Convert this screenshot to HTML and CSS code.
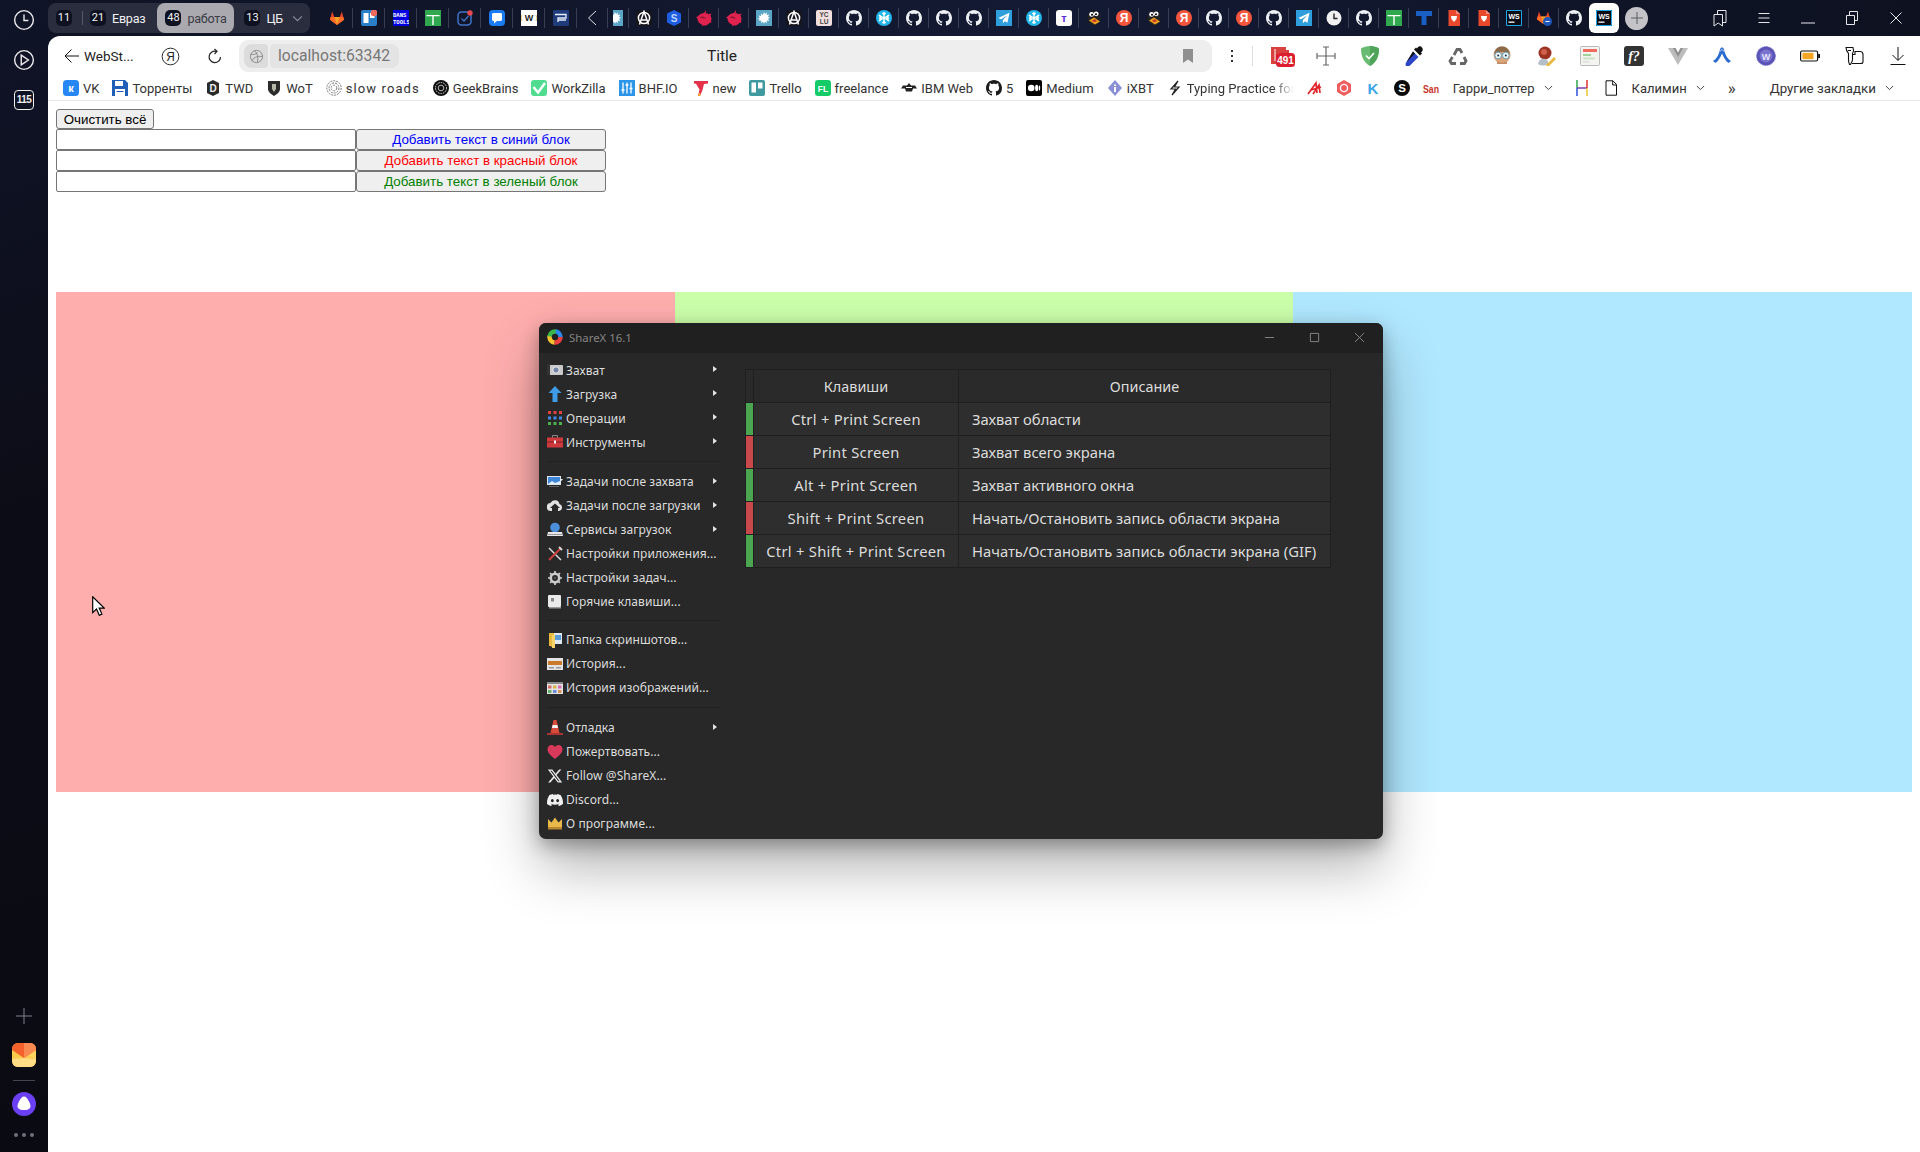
FILE: index.html
```html
<!DOCTYPE html>
<html lang="ru">
<head>
<meta charset="utf-8">
<title>Title</title>
<link rel="stylesheet" href="styles.css">
</head>
<body>
<svg class="defs" aria-hidden="true">
  <symbol id="gh" viewBox="0 0 16 16"><path fill="currentColor" d="M8 0C3.58 0 0 3.58 0 8c0 3.54 2.29 6.53 5.47 7.59.4.07.55-.17.55-.38 0-.19-.01-.82-.01-1.49-2.01.37-2.53-.49-2.69-.94-.09-.23-.48-.94-.82-1.13-.28-.15-.68-.52-.01-.53.63-.01 1.08.58 1.23.82.72 1.21 1.87.87 2.33.66.07-.52.28-.87.51-1.07-1.78-.2-3.64-.89-3.64-3.95 0-.87.31-1.59.82-2.15-.08-.2-.36-1.02.08-2.12 0 0 .67-.21 2.2.82.64-.18 1.32-.27 2-.27s1.36.09 2 .27c1.53-1.04 2.2-.82 2.2-.82.44 1.1.16 1.92.08 2.12.51.56.82 1.27.82 2.15 0 3.07-1.87 3.75-3.65 3.95.29.25.54.73.54 1.48 0 1.07-.01 1.93-.01 2.2 0 .21.15.46.55.38A8.013 8.013 0 0016 8c0-4.42-3.58-8-8-8z"/></symbol>
  <symbol id="gitlab" viewBox="0 0 24 24"><path fill="#e24329" d="M12 22.5 1.4 14.6 4.7 2.4 8 10.4h8l3.3-8 3.3 12.2z"/><path fill="#fc6d26" d="M12 22.5 8 10.4H2.6L1.4 14.6zM12 22.5l4-12.1h5.4l1.2 4.2z"/><path fill="#fca326" d="M12 22.5 8 10.4h8z"/></symbol>
  <symbol id="tg" viewBox="0 0 16 16"><rect width="16" height="16" fill="#2e9fdc"/><path fill="#fff" d="M13.5 2.8 2.3 8l3 1.2 6-4-4.4 4.9v3.2l2-2 2.5 1.4z"/></symbol>
  <symbol id="snow" viewBox="0 0 16 16"><circle cx="8" cy="8" r="8" fill="#23b5e8"/><g stroke="#fff" stroke-width="1.3" fill="none"><path d="M8 2v12M2.8 5l10.4 6M13.2 5 2.8 11"/><path d="M6.4 3 8 4.6 9.600 3M6.400 13 8 11.400 9.600 13M3 7 5 7.700 4.200 5.700M13 9l-2-.7.800 2M13 7l-2 .7.800-2M3 9l2-.7-.8 2"/></g></symbol>
  <symbol id="duck" viewBox="0 0 16 16"><ellipse cx="8" cy="8" rx="6.500" ry="7.500" fill="#222"/><circle cx="5.600" cy="4.400" r="2.400" fill="#fff"/><circle cx="10.200" cy="3.800" r="2.400" fill="#fff"/><circle cx="6" cy="4.800" r="1" fill="#000"/><circle cx="10" cy="4.200" r="1" fill="#000"/><path fill="#f0a020" d="M3 10.500 8 7.500l6 4-5 3z"/><path fill="#c0392b" d="M6 10.500 9 9l2 2.200-3 1z"/></symbol>
  <symbol id="nest" viewBox="0 0 16 16"><path fill="#e0234e" d="M9.500 0c1 1.300.6 2.500-.2 3.300 1.300-.2 2.600.2 3.500 1l2.700-.8-1 2.200c1 1.500 1.300 3.500.5 5.300l.5 1.500-1.800.2C12 14.800 9.700 16 7.500 15.500l-1.500.5.200-1.200C3.500 13.800 1.500 11.500 1.500 8.500L0 7l1.900-.6C3 4.500 5 3.300 7 3.200 8.500 3 9.500 1.500 9.500 0z"/><path fill="#8f1632" d="M3.500 7C5.500 6 8 6.300 10 8.200 8 8.700 5.500 8.500 3.500 7z"/></symbol>
  <symbol id="anarchy" viewBox="0 0 16 16"><rect width="16" height="16" rx="3" fill="#15151c"/><circle cx="8" cy="8" r="5.600" fill="none" stroke="#fff" stroke-width="1.500"/><path d="M3.500 14.500 8 1.500l4.500 13M4.500 10h7" fill="none" stroke="#fff" stroke-width="1.500"/></symbol>
  <symbol id="splash" viewBox="0 0 16 16"><rect width="16" height="16" fill="#5ba6c4"/><path fill="#fff" d="M8 2l1 2 2-1.500-.3 2.500 2.500-.5-1.200 2.300 2 1-2 1 1.200 2.300-2.500-.5.300 2.400-2-1.300-1 2-1-2-2 1.300.3-2.400-2.500.5L3.800 9.800l-2-1 2-1-1.200-2.300 2.500.5-.3-2.500 2 1.500z"/></symbol>
  <symbol id="brave" viewBox="0 0 16 16"><path fill="#e8492d" d="M2.500 0h7.500l4 4v12h-11.500z"/><path fill="#f58f7d" d="M10 0l4 4h-4z"/><path fill="#fff" d="M5 6h6l-.5 3L8 12 5.500 9z"/></symbol>
  <symbol id="green" viewBox="0 0 16 16"><rect width="16" height="16" fill="#2fa84f"/><path fill="#fff" d="M1.500 5h13v1.300h-13zM7.300 5h1.400v10H7.300z"/></symbol>
</svg>

<aside class="side">
  <div class="side-top">
    <svg class="side-ic" viewBox="0 0 20 20"><circle cx="10" cy="10" r="8.500"/><path d="M10 5v5.500h4"/></svg>
    <svg class="side-ic" viewBox="0 0 20 20"><circle cx="10" cy="10" r="8.500"/><path d="M7.500 5.500 14 10l-6.500 4.500z"/></svg>
    <div class="side-badge">115</div>
  </div>
  <div class="side-bottom">
    <svg class="side-plus" viewBox="0 0 16 16"><path d="M8 0v16M0 8h16"/></svg>
    <svg class="side-app" viewBox="0 0 24 24"><rect width="24" height="24" rx="6" fill="#ffc94a"/><path d="M0 6a6 6 0 016-6h12a6 6 0 016 6v1L12 15 0 7z" fill="#f4612c"/><path d="M12 15 24 7v9l-6-3z" fill="#ffd768" opacity=".7"/><path d="M12 0h6a6 6 0 016 6v1l-12 8z" fill="#f98a52"/><path d="M0 16l12-1 12 1v2a6 6 0 01-6 6H6a6 6 0 01-6-6z" fill="#ffdc85"/></svg>
    <div class="side-rule"></div>
    <svg class="side-app" viewBox="0 0 24 24"><circle cx="12" cy="12" r="12" fill="#6b3ff2"/><path fill="#fff" d="M12 4.500c2 0 3.500 2 5 5 1.500 3 2 5 1 6.500-1.500 1.800-3.500 2-6 2s-4.500-.2-6-2c-1-1.500-.5-3.500 1-6.500s3-5 5-5z"/></svg>
    <div class="side-dots"><i></i><i></i><i></i></div>
  </div>
</aside>

<div class="main">
  <header class="strip">
    <div class="groups">
      <span class="num">11</span><span class="gsep"></span>
      <span class="num n2">21</span><span class="glabel">Евраз</span>
      <span class="gactive"><span class="num">48</span><span class="glabel">работа</span></span>
      <span class="num n3">13</span><span class="glabel">ЦБ</span>
      <svg class="gchev" viewBox="0 0 12 8"><path d="M1 1.500 6 6.500l5-5"/></svg>
    </div>
    <div class="tabs t32">
      <span class="slot"><svg class="i"><use href="#gitlab"/></svg></span>
      <span class="slot"><svg class="i" viewBox="0 0 16 16"><rect width="16" height="16" rx="2" fill="#2a7fc9"/><rect x="2.500" y="3" width="5" height="10" fill="#fff"/><rect x="9" y="3" width="4.500" height="5" fill="#fff"/><circle cx="13" cy="3" r="3.300" fill="#ee6a5f"/></svg></span>
      <span class="slot"><svg class="i" viewBox="0 0 16 16"><rect width="16" height="16" fill="#0000e0"/><text class="svgmono" x="0" y="6.500" font-size="5.600" fill="#fff">DANS</text><text class="svgmono" x="0" y="14" font-size="5.600" fill="#fff">TOOLS</text></svg></span>
      <span class="slot"><svg class="i"><use href="#green"/></svg></span>
      <span class="slot"><svg class="i" viewBox="0 0 16 16"><rect x="1" y="2" width="13" height="13" rx="3.500" fill="none" stroke="#3f74c8" stroke-width="1.500"/><path d="M4.500 8.500 7 11l4.500-5" fill="none" stroke="#3f74c8" stroke-width="1.300"/><circle cx="13" cy="3" r="2.700" fill="#e5484d"/></svg></span>
      <span class="slot"><svg class="i" viewBox="0 0 16 16"><rect width="16" height="16" rx="4" fill="#1a7cf5"/><path fill="#fff" d="M3 4.500C3 3.700 3.700 3 4.500 3h7c.8 0 1.500.7 1.500 1.500v5c0 .8-.7 1.500-1.500 1.500H8l-3 2.500V11h-.5C3.700 11 3 10.300 3 9.500z"/></svg></span>
      <span class="slot"><svg class="i" viewBox="0 0 16 16"><rect width="16" height="16" fill="#fff"/><text class="svgbold" x="8" y="11" font-size="9" fill="#222" text-anchor="middle">W</text><path d="M1 5 0 8l1 3M15 5l1 3-1 3" stroke="#d9b84a" fill="none" stroke-width=".8"/></svg></span>
      <span class="slot"><svg class="i" viewBox="0 0 16 16"><rect width="16" height="16" rx="1" fill="#1f3b7a"/><path d="M2 4.500h11v3.500H5v4M5 10h8" fill="none" stroke="#e6eefc" stroke-width="1.300"/></svg></span>
      <span class="slot"><svg class="i" viewBox="0 0 16 16"><path d="M12 1 4.500 8l7.500 7" fill="none" stroke="#e2e2e6" stroke-width="1"/></svg></span>
    </div>
    <div class="tabs t30">
      <span class="slot clip"><span class="clipwrap"><svg class="i"><use href="#splash"/></svg></span></span>
      <span class="slot"><svg class="i"><use href="#anarchy"/></svg></span>
      <span class="slot"><svg class="i" viewBox="0 0 16 16"><path fill="#1e5ce0" d="M8 0l7 3.500v9L8 16l-7-3.500v-9z"/><text class="svgbold" x="8" y="11.500" font-size="10" fill="#bcd4ff" text-anchor="middle">S</text></svg></span>
      <span class="slot"><svg class="i"><use href="#nest"/></svg></span>
      <span class="slot"><svg class="i"><use href="#nest"/></svg></span>
      <span class="slot"><svg class="i"><use href="#splash"/></svg></span>
      <span class="slot"><svg class="i"><use href="#anarchy"/></svg></span>
      <span class="slot"><svg class="i" viewBox="0 0 16 16"><rect width="16" height="16" rx="2" fill="#f1dede"/><text class="svgbold" x="8" y="7.200" font-size="6.500" fill="#444" text-anchor="middle">YC</text><text class="svgbold" x="8" y="14" font-size="6.500" fill="#444" text-anchor="middle">LU</text></svg></span>
      <span class="slot"><svg class="i gh"><use href="#gh"/></svg></span>
      <span class="slot"><svg class="i"><use href="#snow"/></svg></span>
      <span class="slot"><svg class="i gh"><use href="#gh"/></svg></span>
      <span class="slot"><svg class="i gh"><use href="#gh"/></svg></span>
      <span class="slot"><svg class="i gh"><use href="#gh"/></svg></span>
      <span class="slot"><svg class="i"><use href="#tg"/></svg></span>
      <span class="slot"><svg class="i"><use href="#snow"/></svg></span>
      <span class="slot"><svg class="i" viewBox="0 0 16 16"><rect width="16" height="16" rx="3" fill="#fff"/><text class="svgbold" x="8" y="12" font-size="11" fill="#5b2ee0" text-anchor="middle">т</text></svg></span>
      <span class="slot"><svg class="i"><use href="#duck"/></svg></span>
      <span class="slot"><svg class="i" viewBox="0 0 16 16"><circle cx="8" cy="8" r="8" fill="#f4553d"/><text class="svgbold" x="8" y="12.400" font-size="12" fill="#fff" text-anchor="middle">Я</text></svg></span>
      <span class="slot"><svg class="i"><use href="#duck"/></svg></span>
      <span class="slot"><svg class="i" viewBox="0 0 16 16"><circle cx="8" cy="8" r="8" fill="#f4553d"/><text class="svgbold" x="8" y="12.400" font-size="12" fill="#fff" text-anchor="middle">Я</text></svg></span>
      <span class="slot"><svg class="i gh"><use href="#gh"/></svg></span>
      <span class="slot"><svg class="i" viewBox="0 0 16 16"><circle cx="8" cy="8" r="8" fill="#f4553d"/><text class="svgbold" x="8" y="12.400" font-size="12" fill="#fff" text-anchor="middle">Я</text></svg></span>
      <span class="slot"><svg class="i gh"><use href="#gh"/></svg></span>
      <span class="slot"><svg class="i"><use href="#tg"/></svg></span>
      <span class="slot"><svg class="i" viewBox="0 0 16 16"><circle cx="8" cy="8" r="7.500" fill="#f2f2f2"/><path d="M8 3.500V8.500h3.500" fill="none" stroke="#222" stroke-width="1.400"/></svg></span>
      <span class="slot"><svg class="i gh"><use href="#gh"/></svg></span>
      <span class="slot"><svg class="i"><use href="#green"/></svg></span>
      <span class="slot"><svg class="i" viewBox="0 0 16 16"><path fill="#1a5fc4" d="M0 1h16v5h-5.500v9h-5V6H0z"/></svg></span>
      <span class="slot"><svg class="i"><use href="#brave"/></svg></span>
      <span class="slot"><svg class="i"><use href="#brave"/></svg></span>
      <span class="slot"><svg class="i" viewBox="0 0 16 16"><rect width="16" height="16" fill="#0b0b12"/><path fill="none" stroke="#1fa5e8" d="M.500.500h15v15H.500z"/><text class="svgbold" x="2.500" y="8.500" font-size="7" fill="#fff">WS</text><rect x="2.500" y="11.500" width="6" height="1.300" fill="#fff"/></svg></span>
      <span class="slot"><svg class="i" viewBox="0 0 16 16"><use href="#gitlab" width="15" height="15"/><circle cx="11.500" cy="11.500" r="4.500" fill="#1e57b8"/><path d="M9.500 11.500h4" stroke="#fff"/></svg></span>
      <span class="slot"><svg class="i gh"><use href="#gh"/></svg></span>
      <span class="slot active"><svg class="i" viewBox="0 0 16 16"><rect width="16" height="16" fill="#0b0b12"/><path fill="none" stroke="#1fa5e8" d="M.500.500h15v15H.500z"/><text class="svgbold" x="2.500" y="8.500" font-size="7" fill="#fff">WS</text><rect x="2.500" y="11.500" width="6" height="1.300" fill="#fff"/></svg></span>
    </div>
    <div class="addtab"><svg viewBox="0 0 12 12"><path d="M6 0v12M0 6h12"/></svg></div>
    <div class="winctl">
      <svg class="wc" viewBox="0 0 16 18"><path d="M2 5.500h8.500V17L6.200 14 2 17zM5.500 5.500V1.500H14v12h-3.500"/></svg>
      <svg class="wc" viewBox="0 0 16 18"><path d="M2.500 4.500h11M2.500 9h11M2.500 13.500h11"/></svg>
      <svg class="wc" viewBox="0 0 16 18"><path d="M1 14h14"/></svg>
      <svg class="wc" viewBox="0 0 16 18"><path d="M2.500 6.500h8v9h-8zM5.500 6.500v-4h8v9h-3"/></svg>
      <svg class="wc" viewBox="0 0 16 18"><path d="M2.500 3.500l11 11M13.500 3.500l-11 11"/></svg>
    </div>
  </header>

  <div class="browser">
    <nav class="navbar">
      <svg class="nav-back" viewBox="0 0 16 16"><path d="M7.500 1.500 1 8l6.500 6.500M1 8h14"/></svg>
      <span class="nav-from">WebSt...</span>
      <svg class="nav-ya" viewBox="0 0 20 20"><circle cx="10" cy="10" r="8.800"/><text class="svgreg" x="10" y="14.500" font-size="12.500" text-anchor="middle">Я</text></svg>
      <svg class="nav-reload" viewBox="0 0 16 16"><path d="M13.500 8.500A5.700 5.700 0 1 1 9 2.800"/><path d="M7.500.5 10 2.800 7.500 5.500"/></svg>
      <div class="address">
        <span class="chip-globe"><svg viewBox="0 0 16 16"><circle cx="8" cy="8" r="6.500"/><path d="M2 5.500c3 1 5 0 7-1.500M3 13c1-3 5-6 11-5M6 2c3 2 4 7 3 12"/></svg></span>
        <span class="chip-host">localhost:63342</span>
        <span class="addr-title">Title</span>
        <svg class="addr-mark" viewBox="0 0 10 14"><path d="M0 0h10v14L5 10.500 0 14z"/></svg>
      </div>
      <span class="kebab"><i></i><i></i><i></i></span>
      <span class="nav-rule"></span>
      <div class="ext">
        <span class="eslot"><svg class="e e-wide" viewBox="0 0 25 21"><path fill="#d8413d" d="M1 1h15v3h3v3H8v11H1z"/><path fill="#fff" d="M4 3h2v12H4z" opacity=".5"/><rect x="6" y="7" width="19" height="14" rx="3.500" fill="#dc1f2e"/><text class="svgbold" x="15.500" y="17.500" font-size="10" fill="#fff" text-anchor="middle">491</text></svg></span>
        <span class="eslot"><svg class="e" viewBox="0 0 20 20"><path d="M10 1v18M1 10h18M7 1h6M7 19h6M1 7v6M19 7v6" fill="none" stroke="#666" stroke-width="1.200"/></svg></span>
        <span class="eslot"><svg class="e" viewBox="0 0 20 20"><path fill="#68bc71" d="M10 0c3 0 7 1 9 2.500 0 7-2 13.500-9 17.500C3 16 1 9.500 1 2.500 3 1 7 0 10 0z"/><path fill="#4fa45a" d="M10 0c3 0 7 1 9 2.500 0 7-2 13.500-9 17.500z"/><path d="M6 9.500 9 12.500l5-5.500" fill="none" stroke="#fff" stroke-width="1.600"/></svg></span>
        <span class="eslot"><svg class="e" viewBox="0 0 20 20"><path fill="#111" d="M14 1c1-1 3-1 4 .5s1 3 0 4l-1 1 1 1-2 2-6-6 2-2 1 1z"/><path fill="#2d46c9" d="M9 5.500l5.500 5.500L6 19.500c-1 .8-2.500 1-4 .5-.8-1.500-.5-3 .5-4z"/><path fill="#111" d="M9 5.500l2 2L3.500 15 2.500 16z"/></svg></span>
        <span class="eslot"><svg class="e" viewBox="0 0 20 20"><g fill="none" stroke="#666" stroke-width="2.800"><path d="M6 9 9 3.500h3l2 3.500"/><path d="M16 11l2 4-1.500 2.500H12"/><path d="M8 17.500H3.500L2 15l2.500-4"/></g></svg></span>
        <span class="eslot"><svg class="e" viewBox="0 0 20 20"><circle cx="10" cy="9" r="8.500" fill="#d9a57c"/><path d="M2 8C3 2 7 .5 10 .5S17 2 18 8c-3-3-13-3-16 0z" fill="#8d6a4a"/><circle cx="6.200" cy="9.500" r="3.400" fill="#e8f4f8" stroke="#6a9ab0"/><circle cx="13.800" cy="9.500" r="3.400" fill="#e8f4f8" stroke="#6a9ab0"/><circle cx="6.200" cy="9.500" r="1" fill="#234"/><circle cx="13.800" cy="9.500" r="1" fill="#234"/><path d="M5 15c3 2 7 2 10 0v3H5z" fill="#c48f68"/></svg></span>
        <span class="eslot"><svg class="e" viewBox="0 0 20 20"><circle cx="9" cy="7" r="6.500" fill="#9b3222"/><circle cx="8" cy="6" r="3" fill="#d0604a"/><path d="M2 18c1-5 4-6 7-5s3 2 3 5c-4 2-7 2-10 0z" fill="#b5bfc9"/><path d="M11 18l7-7 2 2-7 7-3 0z" fill="#e9b93f"/></svg></span>
        <span class="eslot"><svg class="e" viewBox="0 0 20 20"><rect x=".5" y=".5" width="19" height="19" rx="1" fill="#f3f3f0" stroke="#bbb"/><rect x="3" y="3" width="14" height="3" fill="#ef6b60"/><rect x="3" y="8" width="8" height="2" fill="#9ed39a"/><rect x="3" y="11.500" width="12" height="2" fill="#cfe3c9"/><rect x="3" y="15" width="6" height="1.500" fill="#ddd"/></svg></span>
        <span class="eslot"><svg class="e" viewBox="0 0 20 20"><rect width="20" height="20" rx="3" fill="#333"/><text class="svgital" x="10" y="15" font-size="14" fill="#fff" text-anchor="middle">f?</text></svg></span>
        <span class="eslot"><svg class="e" viewBox="0 0 20 20"><path fill="#bdbdbd" d="M0 2h6l4 7 4-7h6L10 19z"/><path fill="#8e8e8e" d="M5 2h2.500l2.500 4.500L12.500 2H15l-5 9z"/></svg></span>
        <span class="eslot"><svg class="e" viewBox="0 0 20 20"><path d="M7 7C8 4 8 1.500 10 1.500S12 4 13 7c1 3 3 6.500 6 8l-2.500 2c-3-2-5-6-6.500-9.500C8.500 11 6.500 15 3.500 17L1 15c3-1.500 5-5 6-8z" fill="#2b6bd0"/><path d="M8.300 5.500c1-2.500 2.400-2.500 3.400 0" stroke="#fff" fill="none" stroke-width=".7"/></svg></span>
        <span class="eslot"><svg class="e" viewBox="0 0 20 20"><circle cx="10" cy="10" r="9.500" fill="#5a52b5" stroke="#8780d6" stroke-dasharray="1.500 1"/><circle cx="10" cy="10" r="6.500" fill="#7a74cf"/><text class="svgbold" x="10" y="13.500" font-size="9" fill="#e8e6ff" text-anchor="middle">W</text></svg></span>
        <span class="eslot"><svg class="e" viewBox="0 0 20 12"><rect x=".6" y="1" width="17" height="10" rx="1.500" fill="#fff" stroke="#111" stroke-width="1.200"/><rect x="2.500" y="2.800" width="11" height="6.400" fill="#f5a623"/><rect x="18.200" y="4" width="1.800" height="4" fill="#111"/></svg></span>
        <span class="eslot"><svg class="e" viewBox="0 0 20 20"><path d="M2 1.500h7c.8 2 .8 4-.5 6v6c0 2-1 3-2 5h-1c-1-2-1-3-1-5v-6C3 5.500 2 4 2 1.500zM8.500 8.500H11V5.500h5c2 0 3 1 3 3v7c0 1.500-1 2-2 2H8" fill="none" stroke="#111" stroke-width="1.100"/><path d="M4 4.500h3" stroke="#111"/></svg></span>
        <span class="eslot"><svg class="e" viewBox="0 0 20 20"><path d="M10 1v13M4.500 9l5.500 5.500L15.500 9M2.500 18.500h15" fill="none" stroke="#111" stroke-width="1"/></svg></span>
      </div>
    </nav>

    <div class="bookmarks">
      <span class="bm"><svg class="b" viewBox="0 0 16 16"><rect width="16" height="16" rx="3.500" fill="#2787f5"/><text class="svgbold" x="8" y="12" font-size="11" fill="#fff" text-anchor="middle">к</text></svg>VK</span>
      <span class="bm"><svg class="b" viewBox="0 0 16 16"><path fill="#1f5fb8" d="M0 0h13l3 3v13H0z"/><rect x="3" y="1" width="8" height="5" fill="#fff"/><rect x="3" y="9" width="10" height="7" fill="#fff"/><rect x="4.500" y="11" width="7" height="1" fill="#1f5fb8"/></svg>Торренты</span>
      <span class="bm"><svg class="b" viewBox="0 0 16 16"><path fill="#2a2a2a" d="M8 0l6 3v10l-6 3-6-3V3z"/><text class="svgbold" x="8" y="12" font-size="10" fill="#eee" text-anchor="middle">D</text></svg>TWD</span>
      <span class="bm"><svg class="b" viewBox="0 0 16 16"><path fill="#2b2b2b" d="M2 1h12v8c0 3-3 5-6 7-3-2-6-4-6-7z"/><path fill="#b8b8a8" d="M6 4h4v5l-2 3-2-3z"/></svg>WoT</span>
      <span class="bm bm-wide"><svg class="b" viewBox="0 0 16 16"><g fill="none" stroke="#777" stroke-width="1" stroke-dasharray="2 1"><circle cx="8" cy="8" r="7.200"/><circle cx="8" cy="8" r="5"/><circle cx="8" cy="8" r="2.800"/></g></svg>slow roads</span>
      <span class="bm"><svg class="b" viewBox="0 0 16 16"><circle cx="8" cy="8" r="8" fill="#111"/><circle cx="8" cy="8" r="5.500" fill="none" stroke="#ddd" stroke-dasharray="1.500 1"/><circle cx="8" cy="8" r="2.800" fill="none" stroke="#ddd" stroke-width=".8"/></svg>GeekBrains</span>
      <span class="bm"><svg class="b" viewBox="0 0 16 16"><rect width="16" height="16" rx="3" fill="#4fdc8f"/><path d="M2.500 7 7 12.500 14 3" fill="none" stroke="#fff" stroke-width="2.500"/></svg>WorkZilla</span>
      <span class="bm"><svg class="b" viewBox="0 0 16 16"><rect width="16" height="16" fill="#2d95e8"/><path d="M4 2.500v11M8 2.500v11M12 2.500v11" stroke="#fff" stroke-width="1.300"/><path d="M2.500 10h3M6.500 5h3M10.500 8.500h3" stroke="#fff" stroke-width="1.500"/></svg>BHF.IO</span>
      <span class="bm bm-new"><svg class="b" viewBox="0 0 16 16"><path fill="#e5324b" d="M1 1h14v2.500l-4 .5-1.500 6L7 16H5l1.500-6.500L3 3.800 1 3.500z"/><path fill="#f5a623" d="M5 16l1-3 1.500 0L7 16z"/></svg>new</span>
      <span class="bm"><svg class="b" viewBox="0 0 16 16"><rect width="16" height="16" rx="2" fill="#3f9a9f"/><rect x="2.500" y="2.500" width="4.500" height="10" fill="#fff"/><rect x="9" y="2.500" width="4.500" height="6" fill="#fff"/></svg>Trello</span>
      <span class="bm"><svg class="b" viewBox="0 0 16 16"><rect width="16" height="16" rx="3" fill="#14cb68"/><text class="svgbold" x="8" y="11.500" font-size="8.500" fill="#fff" text-anchor="middle">FL</text></svg>freelance</span>
      <span class="bm"><svg class="b" viewBox="0 0 16 16"><path fill="#222" d="M8 3l2 2.500H14l2 3h-4l-1 3H5l-1-3H0l2-3h4z"/><path stroke="#fff" d="M5 7.500h6"/></svg>IBM Web</span>
      <span class="bm"><svg class="b bgh"><use href="#gh"/></svg>5</span>
      <span class="bm"><svg class="b" viewBox="0 0 16 16"><rect width="16" height="16" rx="2" fill="#000"/><circle cx="5.200" cy="8" r="3.300" fill="#fff"/><ellipse cx="10.700" cy="8" rx="1.600" ry="3.200" fill="#fff"/><ellipse cx="13.500" cy="8" rx=".7" ry="2.800" fill="#fff"/></svg>Medium</span>
      <span class="bm"><svg class="b" viewBox="0 0 16 16"><path fill="#8b8fd6" d="M8 0l7 8-7 8-7-8z"/><path fill="#fff" d="M7 4.500h2v1.500H7zM7 7h2v5H7z"/></svg>iXBT</span>
      <span class="bm"><svg class="b" viewBox="0 0 16 16"><path d="M11 1 4 9h4.500L5 15l7-8H7.500z" fill="none" stroke="#222" stroke-width="1.200"/></svg><span class="bm-fade">Typing Practice for</span></span>
      <span class="bm"><svg class="b" viewBox="0 0 16 16"><path d="M1 14 9 3l1 10M4 10l10-3M6 14 12 5l1 8" fill="none" stroke="#e0262c" stroke-width="1.700"/></svg></span>
      <span class="bm"><svg class="b" viewBox="0 0 16 16"><path fill="#ef5d5d" d="M8 0l7 4v8l-7 4-7-4V4z"/><circle cx="8" cy="8" r="3.600" fill="none" stroke="#fff" stroke-width="1.400"/></svg></span>
      <span class="bm"><svg class="b" viewBox="0 0 16 16"><text class="svgbold" x="8" y="14" font-size="15" fill="#3aa5e8" text-anchor="middle">K</text></svg></span>
      <span class="bm"><svg class="b" viewBox="0 0 16 16"><circle cx="8" cy="8" r="8" fill="#0a0a0a"/><text class="svgbold" x="8" y="12.300" font-size="11.500" fill="#fff" text-anchor="middle">S</text></svg></span>
      <span class="bm"><svg class="b" viewBox="0 0 16 16"><text class="svgbold" x="0" y="13" font-size="11" textLength="16" lengthAdjust="spacingAndGlyphs" fill="#c8352a">San</text></svg></span>
      <span class="bm bm-folder bm-harry">Гарри_поттер<svg class="chev" viewBox="0 0 10 6"><path d="M1 .8 5 4.800 9 .8"/></svg></span>
      <span class="bm bm-h"><svg class="b" viewBox="0 0 16 16"><path d="M3 0v8" stroke="#1ea03a" stroke-width="1.400"/><path d="M13 0v8" stroke="#e02020" stroke-width="1.400"/><path d="M3 8h10" stroke="#7a2aa8" stroke-width="1.400"/><path d="M3 8v8" stroke="#1f45d8" stroke-width="1.400"/><path d="M13 8v8" stroke="#e8c020" stroke-width="1.400"/></svg></span>
      <span class="bm"><svg class="b" viewBox="0 0 16 16"><path d="M3 .8h7L13.500 4.500v10.700H3zM9.700 1v4h3.800" fill="#fff" stroke="#111"/></svg></span>
      <span class="bm bm-folder">Калимин<svg class="chev" viewBox="0 0 10 6"><path d="M1 .8 5 4.800 9 .8"/></svg></span>
      <span class="bm bm-more">»</span>
      <span class="bm bm-folder bm-other">Другие закладки<svg class="chev" viewBox="0 0 10 6"><path d="M1 .8 5 4.800 9 .8"/></svg></span>
    </div>

    <main class="page">
      <button class="btn btn-clear" type="button">Очистить всё</button>
      <div class="form-row"><input class="field" type="text"><button class="btn add add-blue" type="button">Добавить текст в синий блок</button></div>
      <div class="form-row"><input class="field" type="text"><button class="btn add add-red" type="button">Добавить текст в красный блок</button></div>
      <div class="form-row"><input class="field" type="text"><button class="btn add add-green" type="button">Добавить текст в зеленый блок</button></div>
      <div class="blocks"><div class="block red"></div><div class="block green"></div><div class="block blue"></div></div>

      <svg class="cursor" viewBox="0 0 13 20"><path d="M.7.700v16l3.800-3.600 2.800 6.200 2.600-1.200-2.700-6h5z" fill="#fff" stroke="#000" stroke-width="1.200"/></svg>

      <section class="sx">
        <div class="sx-title">
          <svg class="sx-logo" viewBox="0 0 16 16"><circle cx="8" cy="8" r="5.500" fill="none" stroke="#ef3f3f" stroke-width="4.500" stroke-dasharray="9 26"/><circle cx="8" cy="8" r="5.500" fill="none" stroke="#f6c12f" stroke-width="4.500" stroke-dasharray="9 26" stroke-dashoffset="-9"/><circle cx="8" cy="8" r="5.500" fill="none" stroke="#3ab54a" stroke-width="4.500" stroke-dasharray="9 26" stroke-dashoffset="-17.500"/><circle cx="8" cy="8" r="5.500" fill="none" stroke="#2a86e8" stroke-width="4.500" stroke-dasharray="9 26" stroke-dashoffset="-26"/></svg>
          <span class="sx-name">ShareX 16.1</span>
          <span class="sx-ctl">
            <svg viewBox="0 0 12 12"><path d="M1 6h10"/></svg>
            <svg viewBox="0 0 12 12"><path d="M1.500 1.500h9v9h-9z"/></svg>
            <svg viewBox="0 0 12 12"><path d="M1 1l10 10M11 1 1 11"/></svg>
          </span>
        </div>
        <div class="sx-body">
          <ul class="menu">
            <li class="item sub"><svg class="mi" viewBox="0 0 16 16"><rect y="3" width="16" height="10" rx="1" fill="#c9c9c9"/><rect y="2" width="3" height="11" fill="#333"/><circle cx="9" cy="8" r="3.200" fill="#7486a8" stroke="#eee"/></svg>Захват</li>
            <li class="item sub"><svg class="mi" viewBox="0 0 16 16"><path fill="#3f9be8" d="M8 0l6.500 7H10.500v9h-5V7H1.500z"/></svg>Загрузка</li>
            <li class="item sub"><svg class="mi" viewBox="0 0 16 16"><g fill="#e04040"><rect x="1" y="1" width="3" height="3"/><rect x="6.500" y="1" width="3" height="3"/><rect x="12" y="1" width="3" height="3"/></g><g fill="#3f8ae8"><rect x="1" y="6.500" width="3" height="3"/><rect x="6.500" y="6.500" width="3" height="3"/><rect x="12" y="6.500" width="3" height="3"/></g><g fill="#4caf50"><rect x="1" y="12" width="3" height="3"/><rect x="6.500" y="12" width="3" height="3"/><rect x="12" y="12" width="3" height="3"/></g></svg>Операции</li>
            <li class="item sub"><svg class="mi" viewBox="0 0 16 16"><path d="M5.500 4V1.500h5V4" fill="none" stroke="#888"/><rect y="3.500" width="16" height="10" fill="#cf3a3f"/><rect y="7.500" width="16" height="1" fill="#7d1f22"/><rect x="7" y="6.500" width="2" height="3" fill="#fff"/></svg>Инструменты</li>
            <li class="sep"></li>
            <li class="item sub"><svg class="mi" viewBox="0 0 16 16"><rect y="2" width="14" height="9" fill="#dfe6ee"/><rect x="1" y="3" width="12" height="7" fill="#3f86d8"/><path d="M1 10l4-3 3 2 5-2v3z" fill="#dfeefb"/><rect x="2" y="12" width="10" height="1" fill="#999" opacity=".5"/><path d="M13 5h3l-1.500 2z" fill="#eee"/></svg>Задачи после захвата</li>
            <li class="item sub"><svg class="mi" viewBox="0 0 16 16"><path fill="#e2e2e2" d="M4 13A4 4 0 0 1 3.500 5 4.800 4.800 0 0 1 12.500 6 3.600 3.600 0 0 1 12 13h-1V10h2L8 5.500 3 10h2v3z"/></svg>Задачи после загрузки</li>
            <li class="item sub"><svg class="mi" viewBox="0 0 16 16"><circle cx="8" cy="5.500" r="4.800" fill="#4b8fd8"/><path d="M1 10h14l1 4H0z" fill="#e6e6e6"/><rect x="1" y="12" width="14" height="1" fill="#999"/></svg>Сервисы загрузок</li>
            <li class="item"><svg class="mi" viewBox="0 0 16 16"><path d="M2 2l12 12" stroke="#d8d8d8" stroke-width="1.500"/><path d="M14 2 2 14" stroke="#c9403d" stroke-width="2"/><path d="M12 1l3 3" stroke="#d8d8d8" stroke-width="2"/></svg>Настройки приложения...</li>
            <li class="item"><svg class="mi" viewBox="0 0 16 16"><circle cx="8" cy="8" r="4.200" fill="none" stroke="#ccc" stroke-width="2.600"/><path d="M8 1v14M1 8h14M3 3l10 10M13 3 3 13" stroke="#ccc" stroke-width="1.700" stroke-dasharray="2.300 9.400"/><circle cx="8" cy="8" r="1.300" fill="#555"/></svg>Настройки задач...</li>
            <li class="item"><svg class="mi" viewBox="0 0 16 16"><rect x="1" y="1" width="13" height="12" rx="1" fill="#eaeaea"/><rect x="2" y="13" width="12" height="1.500" fill="#999"/><rect x="4" y="4" width="3" height="3.500" fill="#888"/></svg>Горячие клавиши...</li>
            <li class="sep sep-short"></li>
            <li class="item"><svg class="mi" viewBox="0 0 16 16"><path d="M2 1h6v15l-5-2H2z" fill="#e8b93f"/><rect x="7" y="1" width="8" height="11" fill="#dce8f2"/><rect x="8" y="3" width="6" height="5" fill="#5b9bd8"/><path d="M5 3h3v13H5z" fill="#f5d36b"/></svg>Папка скриншотов...</li>
            <li class="item"><svg class="mi" viewBox="0 0 16 16"><rect y="2" width="16" height="12" fill="#e4e4e4"/><rect x="1" y="5" width="14" height="4" fill="#c97a2a"/><rect x="2" y="11" width="5" height="1.500" fill="#999"/><rect x="9" y="11" width="5" height="1.500" fill="#999"/></svg>История...</li>
            <li class="item"><svg class="mi" viewBox="0 0 16 16"><rect y="2" width="16" height="12" fill="#e4e4e4"/><rect y="2" width="16" height="2" fill="#888"/><rect x="1" y="5.500" width="3.500" height="3" fill="#d86a6a"/><rect x="6" y="5.500" width="3.500" height="3" fill="#d8b34a"/><rect x="11" y="5.500" width="3.500" height="3" fill="#d86ab0"/><rect x="1" y="10" width="3.500" height="3" fill="#6ab06a"/><rect x="6" y="10" width="3.500" height="3" fill="#6a8ad8"/><rect x="11" y="10" width="3.500" height="3" fill="#d8935a"/></svg>История изображений...</li>
            <li class="sep"></li>
            <li class="item sub"><svg class="mi" viewBox="0 0 16 16"><path d="M6.500 0h3l3 13h-9z" fill="#d84a3a"/><path d="M5.600 5h4.800l.6 3H5z" fill="#f2f2f2"/><path d="M0 13h16v2H0z" fill="#a33"/></svg>Отладка</li>
            <li class="item"><svg class="mi" viewBox="0 0 16 16"><path fill="#d93a5c" d="M8 15C3 11 .5 8.500.5 5.300.5 2.800 2.300 1 4.500 1 6 1 7.300 1.800 8 3c.7-1.200 2-2 3.500-2 2.200 0 4 1.800 4 4.300C15.500 8.500 13 11 8 15z"/></svg>Пожертвовать...</li>
            <li class="item"><svg class="mi" viewBox="0 0 24 24"><path fill="#e8e8e8" d="M18.244 2.250h3.308l-7.227 8.260 8.502 11.240H16.170l-5.214-6.817L4.990 21.750H1.680l7.730-8.835L1.254 2.250H8.080l4.713 6.231zm-1.161 17.520h1.833L7.084 4.126H5.117z"/></svg>Follow @ShareX...</li>
            <li class="item"><svg class="mi" viewBox="0 0 24 24"><path fill="#f0f0f0" d="M20.317 4.370a19.791 19.791 0 0 0-4.885-1.515.074.074 0 0 0-.079.037c-.21.375-.444.864-.608 1.250a18.270 18.270 0 0 0-5.487 0 12.640 12.640 0 0 0-.617-1.250.077.077 0 0 0-.079-.037A19.736 19.736 0 0 0 3.677 4.370a.07.07 0 0 0-.032.027C.533 9.046-.32 13.580.099 18.057a.082.082 0 0 0 .031.057 19.900 19.900 0 0 0 5.993 3.030.078.078 0 0 0 .084-.028 14.090 14.090 0 0 0 1.226-1.994.076.076 0 0 0-.041-.106 13.107 13.107 0 0 1-1.872-.892.077.077 0 0 1-.008-.128 10.200 10.200 0 0 0 .372-.292.074.074 0 0 1 .077-.01c3.928 1.793 8.180 1.793 12.062 0a.074.074 0 0 1 .078.01c.12.098.246.198.373.292a.077.077 0 0 1-.006.127 12.299 12.299 0 0 1-1.873.892.077.077 0 0 0-.041.107c.36.698.772 1.362 1.225 1.993a.076.076 0 0 0 .084.028 19.839 19.839 0 0 0 6.002-3.030.077.077 0 0 0 .032-.054c.5-5.177-.838-9.674-3.549-13.660a.061.061 0 0 0-.031-.03zM8.020 15.330c-1.183 0-2.157-1.085-2.157-2.419 0-1.333.956-2.419 2.157-2.419 1.210 0 2.176 1.096 2.157 2.420 0 1.333-.956 2.418-2.157 2.418zm7.975 0c-1.183 0-2.157-1.085-2.157-2.419 0-1.333.955-2.419 2.157-2.419 1.210 0 2.176 1.096 2.157 2.420 0 1.333-.946 2.418-2.157 2.418z"/></svg>Discord...</li>
            <li class="item"><svg class="mi" viewBox="0 0 16 16"><path fill="#e8b94a" d="M1 3l3.500 3.500L8 1.500l3.500 5L15 3v10H1z"/><rect x="1" y="11" width="14" height="2.500" fill="#b8862f"/></svg>О программе...</li>
          </ul>
          <table class="keys">
            <thead><tr><th class="mark"></th><th class="k">Клавиши</th><th class="d">Описание</th></tr></thead>
            <tbody>
              <tr><td class="mark ok"></td><td class="k">Ctrl + Print Screen</td><td class="d">Захват области</td></tr>
              <tr><td class="mark bad"></td><td class="k">Print Screen</td><td class="d">Захват всего экрана</td></tr>
              <tr><td class="mark ok"></td><td class="k">Alt + Print Screen</td><td class="d">Захват активного окна</td></tr>
              <tr><td class="mark bad"></td><td class="k">Shift + Print Screen</td><td class="d">Начать/Остановить запись области экрана</td></tr>
              <tr><td class="mark ok"></td><td class="k">Ctrl + Shift + Print Screen</td><td class="d">Начать/Остановить запись области экрана (GIF)</td></tr>
            </tbody>
          </table>
        </div>
      </section>
    </main>
  </div>
</div>
</body>
</html>
```
FILE: styles.css
```css
* { box-sizing: border-box; }
html, body { margin: 0; height: 100%; }
body {
  width: 1920px;
  height: 1152px;
  overflow: hidden;
  display: flex;
  background: linear-gradient(160deg, #101428 0%, #0b0c15 30%, #09090f 100%);
  font-family: Roboto, "Noto Sans", sans-serif;
}
.defs { position: absolute; width: 0; height: 0; overflow: hidden; }
.svgbold { font-family: "Liberation Sans", sans-serif; font-weight: 700; }
.svgreg { font-family: "Liberation Sans", sans-serif; fill: #222; stroke: none; }
.svgmono { font-family: "Liberation Mono", monospace; font-weight: 700; }
.svgital { font-family: "Liberation Serif", serif; font-style: italic; font-weight: 700; }

/* sidebar */
.side { width: 48px; flex: none; display: flex; flex-direction: column; justify-content: space-between; align-items: center; padding: 9px 0 15px; }
.side-top { display: flex; flex-direction: column; align-items: center; gap: 18px; }
.side-ic { width: 22px; height: 22px; fill: none; stroke: #e8e8ea; stroke-width: 1.300; }
.side-badge { width: 20px; height: 20px; margin-top: 1px; border: 1.500px solid #eee; border-radius: 4px; color: #eee; font: 700 10px/17px "Liberation Sans", sans-serif; text-align: center; letter-spacing: -.5px; }
.side-bottom { display: flex; flex-direction: column; align-items: center; }
.side-plus { width: 16px; height: 16px; stroke: #80828c; stroke-width: 1; fill: none; margin-bottom: 19px; }
.side-app { width: 24px; height: 24px; }
.side-rule { width: 22px; height: 1px; background: #44454f; margin: 13px 0 11px; }
.side-dots { display: flex; gap: 4px; margin-top: 17px; }
.side-dots i { width: 4px; height: 4px; border-radius: 50%; background: #6f717b; }

/* top strip */
.main { flex: 1; min-width: 0; display: flex; flex-direction: column; }
.strip { height: 36px; flex: none; display: flex; align-items: center; background: linear-gradient(90deg, #0f1324 0, #131a33 55%, #0d1120 100%); }
.groups { width: 262px; height: 30px; flex: none; display: flex; align-items: center; background: #2a2d3e; border-radius: 8px; padding-left: 8px; color: #f0f0f2; font-size: 12.500px; }
.num { width: 16px; height: 16px; flex: none; border-radius: 5px; background: #0e1120; color: #f2f2f4; font-size: 11px; line-height: 16px; text-align: center; }
.gsep { width: 1px; height: 14px; background: #55586a; margin: 0 7px 0 10px; }
.n2 { margin-right: 6px; }
.glabel { white-space: nowrap; letter-spacing: -.2px; }
.gactive { width: 77px; height: 30px; margin: 0 10px 0 12px; background: #a9a9af; border-radius: 8px; display: flex; align-items: center; gap: 6px; padding-left: 8px; color: #3c3c44; flex: none; }
.n3 { margin-right: 6px; }
.gchev { width: 11px; height: 7px; margin-left: auto; margin-right: 7px; fill: none; stroke: #8a8c98; stroke-width: 1.300; }
.tabs { display: flex; align-items: center; }
.slot { height: 20px; display: flex; align-items: center; justify-content: center; border-right: 1px solid #3a3e52; flex: none; }
.t32 { margin-left: 11px; }
.t32 .slot { width: 32px; }
.t32 .slot:last-child { width: 31px; }
.t30 .slot { width: 30px; }
.t30 .clip { width: 21px; justify-content: flex-start; padding-left: 5px; }
.clipwrap { width: 10px; height: 16px; overflow: hidden; display: flex; justify-content: flex-end; }
.t30 .slot:last-child { border-right: 0; }
.t30 .slot:nth-last-child(2) { border-right: 0; }
.i { width: 16px; height: 16px; display: block; flex: none; }
.gh { color: #eceff3; }
.active { width: 30px; height: 30px; background: #fff; border-radius: 6px; }
.addtab { width: 23px; height: 23px; border-radius: 50%; background: #c4c4c8; margin-left: 6px; display: flex; align-items: center; justify-content: center; flex: none; }
.addtab svg { width: 12px; height: 12px; stroke: #5b5b64; stroke-width: 1; }
.winctl { margin-left: auto; padding-right: 2px; display: flex; }
.wc { width: 16px; height: 18px; margin: 0 14px; fill: none; stroke: #e6e6ea; stroke-width: 1; }

/* browser */
.browser { flex: 1; background: #fff; border-radius: 12px 0 0 0; display: flex; flex-direction: column; min-height: 0; }
.navbar { height: 40px; flex: none; display: flex; align-items: center; }
.nav-back { width: 16px; height: 16px; margin-left: 16px; fill: none; stroke: #111; stroke-width: 1; flex: none; }
.nav-from { width: 52px; margin-left: 4px; font-size: 13.500px; color: #222; white-space: nowrap; }
.nav-ya { width: 19px; height: 19px; margin-left: 25px; fill: none; stroke: #222; stroke-width: 1; flex: none; }
.nav-reload { width: 16px; height: 17px; margin-left: 27px; fill: none; stroke: #222; stroke-width: 1.200; flex: none; }
.address { width: 973px; height: 32px; margin-left: 16px; flex: none; background: #eeeeee; border-radius: 9px; display: flex; align-items: center; padding: 0 4px 0 5px; gap: 2px; }
.chip-globe { width: 24px; height: 24px; background: #dcdcdc; border-radius: 8px 4px 4px 8px; display: flex; align-items: center; justify-content: center; }
.chip-globe svg { width: 15px; height: 15px; fill: none; stroke: #888; stroke-width: 1; }
.chip-host { height: 24px; width: 129px; background: #e4e4e4; border-radius: 4px 8px 8px 4px; font-size: 15.700px; line-height: 24px; color: #777; padding-left: 8px; white-space: nowrap; }
.addr-title { margin-left: 306px; font-size: 15.500px; color: #222; }
.addr-mark { width: 10px; height: 14px; fill: #8f8f8f; margin-left: auto; margin-right: 15px; }
.kebab { width: 4px; margin-left: 19px; display: flex; flex-direction: column; gap: 3px; flex: none; }
.kebab i { width: 2px; height: 2px; background: #333; display: block; }
.nav-rule { width: 1px; height: 20px; margin-left: 17px; background: #ddd; flex: none; }
.ext { display: flex; margin-left: 7px; flex: none; }
.eslot { width: 44px; display: flex; justify-content: center; align-items: center; }
.e { width: 20px; height: 20px; display: block; }
.e-wide { width: 25px; height: 21px; }

.bookmarks { height: 24px; flex: none; border-bottom: 1px solid #e6e6e6; display: flex; align-items: center; padding: 0 0 0 15px; gap: 13px; font-size: 13px; color: #333; white-space: nowrap; box-sizing: content-box; }
.bm { display: flex; align-items: center; gap: 4px; flex: none; }
.b { width: 16px; height: 16px; flex: none; display: block; }
.bgh { color: #1c1c1c; }
.bm-wide { letter-spacing: 1.100px; }
.bm-new { margin-left: 2px; }
.bm-fade { width: 107px; overflow: hidden; display: block; -webkit-mask-image: linear-gradient(90deg, #000 80%, transparent); mask-image: linear-gradient(90deg, #000 80%, transparent); }
.bm-folder { gap: 9px; }
.bm-harry { margin-left: 1px; }
.bm-h { margin-left: 8px; }
.chev { width: 9px; height: 6px; fill: none; stroke: #444; stroke-width: 1.100; }
.bm-more { font-size: 17px; margin-left: 10px; }
.bm-other { margin-left: 21px; font-size: 13.300px; gap: 9px; }

/* page */
.page { flex: 1; padding: 8px; position: relative; font-family: "Liberation Sans", Arial, sans-serif; font-size: 13.333px; background: #fff; }
.btn { display: block; font: inherit; background: #efefef; border: 1px solid #767676; border-radius: 3px; padding: 1px 6px; color: #000; }
.btn-clear { width: 98px; height: 20px; }
.form-row { display: flex; height: 21px; }
.field { width: 300px; height: 21px; border: 1px solid #767676; border-radius: 2px; background: #fff; padding: 1px 2px; }
.add { width: 250px; height: 21px; }
.add-blue { color: #0000ff; }
.add-red { color: #ff0000; }
.add-green { color: #008000; }
.blocks { display: flex; height: 500px; margin-top: 100px; }
.block { flex: 1; }
.red { background: #ffaeae; }
.green { background: #ccffaa; }
.blue { background: #b0e8ff; }
.cursor { position: absolute; left: 44px; top: 495px; width: 13px; height: 20px; }

/* ShareX window */
.sx { position: absolute; left: 491px; top: 222px; width: 844px; height: 516px; background: #282828; border-radius: 7px; overflow: hidden; box-shadow: 0 28px 55px rgba(0,0,0,.30), 0 6px 18px rgba(0,0,0,.30); font-family: "Noto Sans", sans-serif; color: #dcdcdc; }
.sx-title { height: 30px; background: #202020; display: flex; align-items: center; padding: 0 0 2px 8px; }
.sx-logo { width: 16px; height: 16px; flex: none; }
.sx-name { margin-left: 6px; font-size: 11.400px; color: #858585; }
.sx-ctl { margin-left: auto; display: flex; gap: 34px; padding-right: 18px; }
.sx-ctl svg { width: 11px; height: 11px; fill: none; stroke: #8a8a8a; stroke-width: 1; }
.sx-body { display: flex; align-items: flex-start; }
.menu { list-style: none; margin: 5px 0 0; padding: 0 0 0 8px; width: 189px; flex: none; }
.item { height: 24px; display: flex; align-items: center; gap: 3px; font-size: 12px; letter-spacing: .08px; white-space: nowrap; position: relative; }
.mi { width: 16px; height: 16px; flex: none; display: block; }
.sub::after { content: ""; position: absolute; left: 166px; top: 8px; border-left: 4px solid #e4e4e4; border-top: 3.500px solid transparent; border-bottom: 3.500px solid transparent; }
.sep { height: 15.600px; padding-top: 7px; }
.sep-short { height: 14.400px; padding-top: 6px; }
.sep::before { content: ""; display: block; width: 173px; height: 1px; background: #222; }
.keys { border-collapse: collapse; table-layout: fixed; width: 586px; margin: 16px 0 0 17px; font-size: 14.770px; }
.keys th, .keys td { height: 33px; padding: 0; border: 1px solid #1f1f1f; font-weight: 400; white-space: nowrap; }
.keys th { background: #2a2a2a; text-align: center; font-size: 14.400px; }
.keys td { background: #2e2e2e; }
.keys .mark { width: 8px; }
.keys .k { width: 205px; text-align: center; }
.keys td.k { letter-spacing: .27px; }
.keys td.d { padding-left: 13px; }
.keys td.ok { background: #4ca550; }
.keys td.bad { background: #c9484b; }
```
